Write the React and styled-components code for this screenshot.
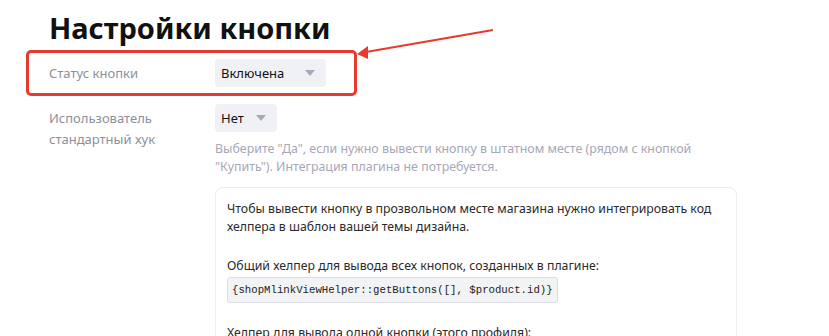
import React from 'react';
import styled, { createGlobalStyle } from 'styled-components';

const GlobalStyle = createGlobalStyle`
  body {
    margin: 0;
    background: #fff;
    font-family: "Noto Sans", "Open Sans", sans-serif;
    color: #222;
  }
`;

const Page = styled.div`
  position: relative;
  width: 829px;
  height: 336px;
  overflow: hidden;
  padding-left: 49px;
  box-sizing: border-box;
`;

const Title = styled.h1`
  margin: 0;
  padding-top: 10px;
  font-size: 29px;
  line-height: 36px;
  font-weight: 700;
  color: #111;
`;

const Form = styled.div`
  display: flex;
  flex-direction: column;
  gap: 17px;
  margin-top: 13px;
`;

const Row = styled.div`
  display: grid;
  grid-template-columns: 166px 522px;
  align-items: start;
`;

const Label = styled.div`
  font-size: 13px;
  line-height: 21px;
  color: #8b909c;
  padding-top: 4px;
`;

const Field = styled.div`
  display: flex;
  flex-direction: column;
  align-items: flex-start;
`;

const Select = styled.div`
  display: flex;
  align-items: center;
  justify-content: space-between;
  box-sizing: border-box;
  width: ${(p) => p.$width}px;
  height: 28px;
  padding: 0 11px 0 6px;
  background: #f0f1f5;
  border-radius: 4px;
  font-size: 13px;
  color: #111;
`;

const Caret = styled.span`
  width: 0;
  height: 0;
  border-left: 5px solid transparent;
  border-right: 5px solid transparent;
  border-top: 6px solid #a9a9ba;
`;

const Hint = styled.div`
  margin-top: 8px;
  font-size: 12.4px;
  line-height: 18px;
  color: #a7a7b6;
`;

const InfoBox = styled.div`
  margin-top: 11px;
  box-sizing: border-box;
  width: 522px;
  padding: 12px 11px 20px;
  border: 1px solid #ececef;
  border-radius: 8px;
  font-size: 12.3px;
  line-height: 18px;
  color: #2a2a2a;
`;

const Para = styled.p`
  margin: 0 0 21px;
`;

const Code = styled.code`
  display: inline-block;
  margin-top: 2px;
  padding: 3px 4px;
  background: #f2f3f5;
  border: 1px solid #dcdde3;
  border-radius: 3px;
  font-family: "Liberation Mono", monospace;
  font-size: 10.7px;
  line-height: 18px;
  color: #222;
`;

const Highlight = styled.div`
  position: absolute;
  left: 26px;
  top: 50px;
  width: 331px;
  height: 46px;
  box-sizing: border-box;
  border: 3px solid #e53a2f;
  border-radius: 5px;
  pointer-events: none;
`;

const Arrow = styled.svg`
  position: absolute;
  left: 0;
  top: 0;
  pointer-events: none;
`;

const App = () => {
  return (
    <Page>
      <GlobalStyle />
      <Title>Настройки кнопки</Title>
      <Form>
        <Row>
          <Label>Статус кнопки</Label>
          <Field>
            <Select $width={111}>
              Включена
              <Caret />
            </Select>
          </Field>
        </Row>
        <Row>
          <Label>
            Использователь
            <br />
            стандартный хук
          </Label>
          <Field>
            <Select $width={62}>
              Нет
              <Caret />
            </Select>
            <Hint>
              Выберите "Да", если нужно вывести кнопку в штатном месте (рядом с кнопкой
              <br />
              "Купить"). Интеграция плагина не потребуется.
            </Hint>
            <InfoBox>
              <Para>
                Чтобы вывести кнопку в прозвольном месте магазина нужно интегрировать код
                <br />
                хелпера в шаблон вашей темы дизайна.
              </Para>
              <Para>
                Общий хелпер для вывода всех кнопок, созданных в плагине:
                <br />
                <Code>{'{shopMlinkViewHelper::getButtons([], $product.id)}'}</Code>
              </Para>
              <Para>Хелпер для вывода одной кнопки (этого профиля):</Para>
            </InfoBox>
          </Field>
        </Row>
      </Form>
      <Highlight />
      <Arrow width="829" height="336">
        <line x1="493" y1="30" x2="366" y2="52" stroke="#e53a2f" strokeWidth="2" />
        <polygon points="357,54 368,46 368,59" fill="#e53a2f" />
      </Arrow>
    </Page>
  );
};

export default App;
